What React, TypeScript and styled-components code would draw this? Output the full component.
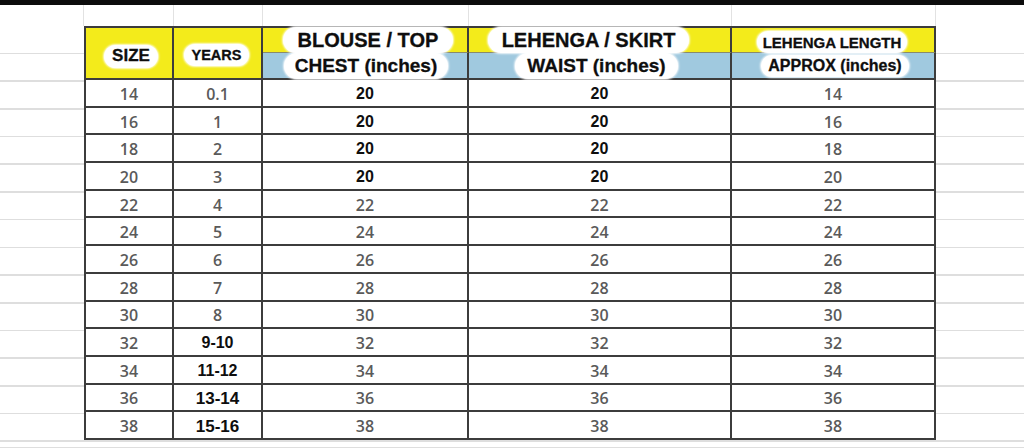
import React from "react";
import styled, { createGlobalStyle, css } from "styled-components";

const GlobalStyle = createGlobalStyle`
    html, body {
        margin: 0;
        padding: 0;
        background: #fff;
    }
    * {
        box-sizing: border-box;
    }
`

const LINE = "#3c3c3c"
const COLS = "88px 89px 206px 263px 204px"

const Page = styled.div`
    width: 1024px;
    height: 448px;
    overflow: hidden;
    background: #fff;
    display: flex;
    flex-direction: column;
`
const TopBar = styled.div`
    height: 5px;
    flex-shrink: 0;
    background: #0c0c0c;
`
const ColumnStrip = styled.div`
    height: 21px;
    flex-shrink: 0;
    display: grid;
    grid-template-columns: 84px 90px 89px 206px 263px 204px 1fr;
`
const StripCell = styled.div`
    border-right: 1px solid #e2e2e2;
    &:last-child {
        border-right: 0;
    }
`
const Body = styled.div`
    flex: 1;
    display: flex;
    align-items: flex-start;
    background-image: repeating-linear-gradient(
        to bottom,
        #dedede 0px,
        #dedede 1.5px,
        transparent 1.5px,
        transparent 27.7px
    );
    background-position: 0 -1px;
`
const Gutter = styled.div<{ $w?: number }>`
    width: ${p => (p.$w ? `${p.$w}px` : "auto")};
    flex: ${p => (p.$w ? "none" : "1")};
    align-self: stretch;
`
const Table = styled.div`
    display: grid;
    grid-template-columns: ${COLS};
    grid-template-rows: 25px 27px repeat(13, 27.7px);
    border-top: 2px solid ${LINE};
    border-left: 2px solid ${LINE};
    background: #fff;
`
const HeadCell = styled.div<{ $tone: "yellow" | "blue"; $tall?: boolean; $split?: boolean }>`
    display: flex;
    align-items: center;
    justify-content: center;
    background: ${p => (p.$tone === "yellow" ? "#f3eb1b" : "#a0c9df")};
    border-right: 2px solid ${LINE};
    border-bottom: ${p => (p.$split ? "1px solid #8a8a6a" : `2px solid ${LINE}`)};
    ${p =>
        p.$tall &&
        css`
            grid-row: span 2;
        `}
`
const Pill = styled.span<{ $size: number; $h: number; $pad: number; $dx?: number; $dy?: number }>`
    display: inline-flex;
    align-items: center;
    height: ${p => p.$h}px;
    padding: 0 ${p => p.$pad}px;
    border-radius: ${p => p.$h / 2}px;
    background: #fff;
    box-shadow: 0 0 2px 1px rgba(255, 255, 255, 0.85);
    font-family: "Liberation Sans", Arial, sans-serif;
    font-weight: 700;
    font-size: ${p => p.$size}px;
    color: #0e0e0e;
    white-space: nowrap;
    -webkit-text-stroke: 0.3px #0e0e0e;
    transform: translate(${p => p.$dx ?? 0}px, ${p => p.$dy ?? 0}px);
`
const DataCell = styled.div`
    display: flex;
    align-items: center;
    justify-content: center;
    padding-top: 2px;
    border-right: 2px solid ${LINE};
    border-bottom: 2px solid ${LINE};
`
const Value = styled.span<{ $bold?: boolean; $size?: number }>`
    font-family: ${p => (p.$bold ? `"Liberation Sans", Arial, sans-serif` : `"Open Sans", "Liberation Sans", sans-serif`)};
    font-weight: ${p => (p.$bold ? 700 : 600)};
    font-size: ${p => p.$size ?? 16}px;
    color: ${p => (p.$bold ? "#0e0e0e" : "#5a5a5a")};
    line-height: 1;
    ${p =>
        p.$bold &&
        css`
            background: #fff;
            padding: 2px 4px;
            border-radius: 6px;
        `}
`

type Row = [string, string, string, string, string]

const rows: Row[] = [
    ["14", "0.1", "20", "20", "14"],
    ["16", "1", "20", "20", "16"],
    ["18", "2", "20", "20", "18"],
    ["20", "3", "20", "20", "20"],
    ["22", "4", "22", "22", "22"],
    ["24", "5", "24", "24", "24"],
    ["26", "6", "26", "26", "26"],
    ["28", "7", "28", "28", "28"],
    ["30", "8", "30", "30", "30"],
    ["32", "9-10", "32", "32", "32"],
    ["34", "11-12", "34", "34", "34"],
    ["36", "13-14", "36", "36", "36"],
    ["38", "15-16", "38", "38", "38"],
]

// 편집된 셀 (굵은 검정 글씨)
const isBold = (r: number, c: number) => (c === 1 && r >= 9) || ((c === 2 || c === 3) && r <= 3)

const boldSize = (r: number, c: number) => (c === 1 && r >= 11 ? 17 : 16)

export default function App() {
    return (
        <>
            <GlobalStyle />
            <Page>
                <TopBar />
                <ColumnStrip>
                    {Array.from({ length: 7 }).map((_, i) => (
                        <StripCell key={i} />
                    ))}
                </ColumnStrip>
                <Body>
                    <Gutter $w={84} />
                    <Table>
                        <HeadCell $tone="yellow" $tall>
                            <Pill $size={17} $h={23} $pad={8} $dx={2} $dy={3}>SIZE</Pill>
                        </HeadCell>
                        <HeadCell $tone="yellow" $tall>
                            <Pill $size={14.5} $h={22} $pad={8} $dx={-1} $dy={2}>YEARS</Pill>
                        </HeadCell>
                        <HeadCell $tone="yellow" $split>
                            <Pill $size={20} $h={26} $pad={15} $dx={3}>BLOUSE / TOP</Pill>
                        </HeadCell>
                        <HeadCell $tone="yellow" $split>
                            <Pill $size={20} $h={26} $pad={14} $dx={-11}>LEHENGA / SKIRT</Pill>
                        </HeadCell>
                        <HeadCell $tone="yellow" $split>
                            <Pill $size={15} $h={22} $pad={6} $dx={-1} $dy={2}>LEHENGA LENGTH</Pill>
                        </HeadCell>
                        <HeadCell $tone="blue">
                            <Pill $size={19} $h={26} $pad={11} $dx={1}>CHEST (inches)</Pill>
                        </HeadCell>
                        <HeadCell $tone="blue">
                            <Pill $size={19} $h={26} $pad={12} $dx={-3}>WAIST (inches)</Pill>
                        </HeadCell>
                        <HeadCell $tone="blue">
                            <Pill $size={16} $h={22} $pad={7} $dx={2}>APPROX (inches)</Pill>
                        </HeadCell>
                        {rows.map((row, r) =>
                            row.map((val, c) => (
                                <DataCell key={`${r}-${c}`}>
                                    {isBold(r, c) ? (
                                        <Value $bold $size={boldSize(r, c)}>{val}</Value>
                                    ) : (
                                        <Value>{val}</Value>
                                    )}
                                </DataCell>
                            ))
                        )}
                    </Table>
                    <Gutter />
                </Body>
            </Page>
        </>
    )
}
